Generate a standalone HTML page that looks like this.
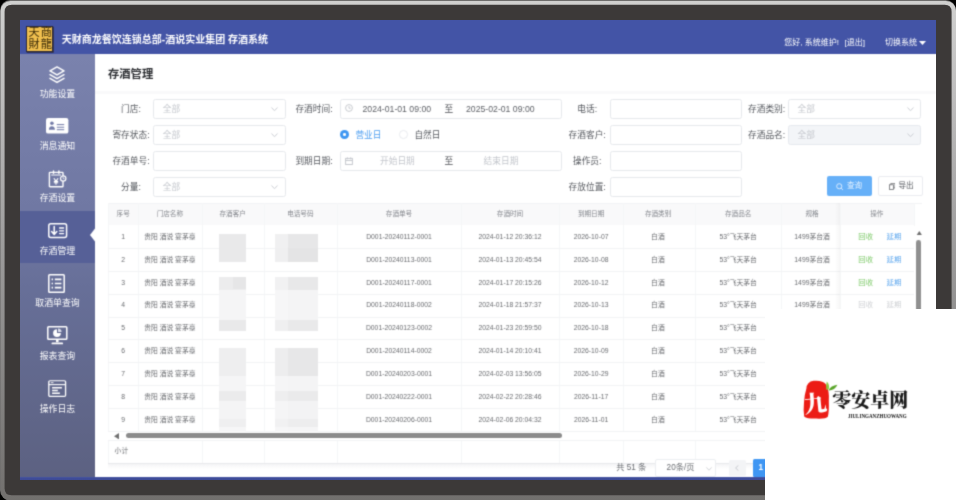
<!DOCTYPE html>
<html lang="zh-CN">
<head>
<meta charset="utf-8">
<title>存酒管理</title>
<style>
*{box-sizing:border-box;margin:0;padding:0}
html,body{width:956px;height:500px;overflow:hidden;background:#fff}
body{font-family:"Liberation Sans","Noto Sans CJK SC",sans-serif;position:relative;color:#606266}
.abs{position:absolute}
#frame{position:absolute;left:0;top:0;width:956px;height:500px}
#screen{position:absolute;left:20px;top:20px;width:916px;height:459.6px;background:#fff;overflow:hidden;filter:url(#soft)}
#hdr{position:absolute;left:0;top:0;width:916px;height:34.4px;background:#4354a6}
#side{position:absolute;left:0;top:34.4px;width:75.4px;height:425.2px;background:linear-gradient(180deg,#7a82ad 0,#6f77a2 40%,#676f98 55%,#5c6181 100%)}
#side .act{position:absolute;left:0;top:157px;width:75.4px;height:52px;background:#566097}
#side .lbl{position:absolute;left:0;width:75px;text-align:center;color:#fff;font-size:8.9px;line-height:12px;white-space:nowrap}
#side svg{position:absolute;overflow:visible}
.t{position:absolute;white-space:nowrap;line-height:12px}
.lab{position:absolute;white-space:nowrap;font-size:8.7px;line-height:12px;color:#55585e;text-align:center;width:60px}
.inp{position:absolute;height:20.8px;border:1px solid #e6e8ec;border-radius:2.5px;background:#fff}
.ph{position:absolute;font-size:8.7px;line-height:12px;color:#c3c6cc;white-space:nowrap}
.c{position:absolute;text-align:center;white-space:nowrap;font-size:6.8px;line-height:10px;color:#6a6c70}
.h{position:absolute;text-align:center;white-space:nowrap;font-size:6.6px;line-height:10px;color:#85888e}
.vl{position:absolute;width:1px;background:#f5f6f7}
.hl{position:absolute;height:1px;background:#f2f3f5}
.mz{position:absolute;background:#e9e9ea}
</style>
</head>
<body>
<svg id="frame" viewBox="0 0 956 500">
<defs>
<linearGradient id="eg" x1="0" y1="0" x2="0" y2="1">
<stop offset="0" stop-color="#d0d0cf"/><stop offset="0.2" stop-color="#bdbcbc"/><stop offset="0.5" stop-color="#9c9b9b"/><stop offset="1" stop-color="#72706e"/>
</linearGradient>
<filter id="soft" x="0" y="0" width="100%" height="100%" color-interpolation-filters="sRGB"><feConvolveMatrix order="3" kernelMatrix="1 4 1 4 16 4 1 4 1" divisor="36" edgeMode="duplicate" preserveAlpha="true"/></filter>
</defs>
<rect x="0" y="0" width="956" height="500" fill="#000"/>
<rect x="0" y="0" width="956" height="500.6" rx="10.5" ry="10.5" fill="#6e6d6c"/>
<rect x="0.6" y="0.9" width="955.4" height="499.4" rx="10" ry="10" fill="url(#eg)"/>
<path d="M12 4.7 H944.6 Q951.6 4.7 951.6 11.7 V488.2 Q951.6 495.2 944.6 495.2 H11.6 Q4.6 495.2 4.6 488.2 V11.7 Q4.6 4.7 12 4.7 Z" fill="#3c3938"/>
</svg>
<div id="screen">
<div id="hdr">
<div class="abs" style="left:6.3px;top:6px;width:26.8px;height:25.6px;background:#f0bf4e;border:0.9px solid #2b2838;box-shadow:0.7px 0.7px 0 #2b2838"></div>
<div class="t" style="left:8.4px;top:7.4px;font-size:11.2px;line-height:11.4px;color:#3a2b08;letter-spacing:1.2px">天商</div>
<div class="t" style="left:8.4px;top:19px;font-size:11.2px;line-height:11.4px;color:#3a2b08;letter-spacing:1.2px">財龍</div>
<div class="t" style="left:41.8px;top:13.6px;font-size:10px;font-weight:700;color:#fff">天财商龙餐饮连锁总部-酒说实业集团 存酒系统</div>
<div class="t" style="left:764.2px;top:16.8px;font-size:8px;color:#fff">您好, 系统维护!</div>
<div class="t" style="left:824.6px;top:16.8px;font-size:8px;color:#fff">[退出]</div>
<div class="t" style="left:865px;top:16.8px;font-size:8px;color:#fff">切换系统</div>
<svg class="abs" style="left:899px;top:21px" width="7" height="4" viewBox="0 0 7 4"><path d="M0 0H7L3.5 4Z" fill="#fff"/></svg>
</div>
<div id="side"><div class="act"></div>
<div class="lbl" style="top:34.0px">功能设置</div>
<div class="lbl" style="top:86.0px">消息通知</div>
<div class="lbl" style="top:138.0px">存酒设置</div>
<div class="lbl" style="top:190.2px">存酒管理</div>
<div class="lbl" style="top:242.4px">取酒单查询</div>
<div class="lbl" style="top:295.6px">报表查询</div>
<div class="lbl" style="top:348.2px">操作日志</div>
<svg style="left:29px;top:11.8px" width="16" height="17.4" viewBox="0 0 16 17.4" fill="none" stroke="#fff" stroke-width="1.5" stroke-linejoin="round" stroke-linecap="round">
<path d="M8 0.9 L15 4.9 L8 8.9 L1 4.9 Z"/><path d="M1 8.7 L8 12.7 L15 8.7"/><path d="M1 12.4 L8 16.4 L15 12.4"/></svg>
<svg style="left:26px;top:63.6px" width="22.4" height="15.6" viewBox="0 0 22.4 15.6">
<rect x="0" y="0" width="22.4" height="15.6" rx="2.2" fill="#fff"/>
<circle cx="5.9" cy="5.3" r="1.8" fill="#737ba7"/><path d="M2.9 11.8 Q2.9 8.2 5.9 8.2 Q8.9 8.2 8.9 11.8 Z" fill="#737ba7"/>
<rect x="10.8" y="6.1" width="7.4" height="1" fill="#737ba7"/><rect x="10.8" y="8.7" width="7.4" height="1.1" fill="#8088b0"/><rect x="10.8" y="11.2" width="7.4" height="1" fill="#737ba7"/></svg>
<svg style="left:28.0px;top:115.6px" width="19" height="18" viewBox="0 0 19 18" fill="none" stroke="#fff" stroke-width="1.4" stroke-linecap="round" stroke-linejoin="round">
<rect x="1.4" y="2.4" width="13.6" height="14.4" rx="0.6"/><path d="M3.6 5 H12.6" stroke-width="1"/><path d="M5.5 0.9 V3.2 M10.9 0.9 V3.2" stroke-width="1.5"/>
<circle cx="15.2" cy="8.5" r="2.7" stroke-width="1.2" fill="#727aa5"/><path d="M15.1 7.4 V8.7 H16.1" stroke-width="0.8"/>
<path d="M6.1 8.6 L8 11 L9.9 8.6 M8 11 V14.2 M6.3 11.4 H9.7 M6.3 12.8 H9.7" stroke-width="1.1"/></svg>
<svg style="left:27.6px;top:168.4px" width="19.4" height="15.4" viewBox="0 0 19.4 15.4" fill="none" stroke="#fff" stroke-width="1.5" stroke-linecap="round" stroke-linejoin="round">
<rect x="0.8" y="0.8" width="17.8" height="13.8" rx="2"/>
<path d="M6.2 3.6 V11.2 M3.6 8.6 L6.2 11.4 L8.8 8.6"/><path d="M11.6 5 H15.6 M11.6 7.8 H15.6 M11.6 10.6 H15.6" stroke-width="1.3"/></svg>
<svg style="left:70.2px;top:174.0px" width="5.4" height="14" viewBox="0 0 6.2 14" preserveAspectRatio="none"><path d="M6.2 0 L0 7 L6.2 14 Z" fill="#fff"/></svg>
<svg style="left:28px;top:219.6px" width="17" height="19" viewBox="0 0 17 19" fill="none" stroke="#fff" stroke-width="1.5" stroke-linejoin="round">
<rect x="0.8" y="0.8" width="15.4" height="17.4" rx="0.8"/>
<path d="M3.6 5.4 H5 M6.8 5.4 H13.4 M3.6 9.5 H5 M6.8 9.5 H13.4 M3.6 13.6 H5 M6.8 13.6 H13.4" stroke-width="1.7"/></svg>
<svg style="left:27px;top:271.6px" width="20.6" height="18.6" viewBox="0 0 20.6 18.6" fill="none" stroke="#fff" stroke-width="1.5" stroke-linejoin="round">
<rect x="0.8" y="0.8" width="19" height="12.4" rx="0.8"/>
<path d="M10.3 13.2 V16.2" stroke-width="2.6"/><path d="M5.4 17.4 H15.2" stroke-width="1.8" stroke-linecap="round"/>
<path d="M10 3.2 A3.9 3.9 0 1 0 13.9 7.1 H10 Z" fill="#fff" stroke="none"/><path d="M11 2.4 A3.6 3.6 0 0 1 14.6 6 H11 Z" fill="#d9dcea" stroke="none"/></svg>
<svg style="left:28.200000000000003px;top:325.2px" width="18.4" height="17.2" viewBox="0 0 18 18.6" preserveAspectRatio="none" fill="none" stroke="#fff" stroke-width="1.3" stroke-linejoin="round">
<rect x="0.8" y="0.8" width="16.4" height="17" rx="1.2"/><path d="M0.8 5 H17.2" stroke-width="1.2"/>
<path d="M2.8 2.9 H5.4" stroke-width="0.9"/>
<path d="M4 8.4 H13.6 M4 11.4 H9.6 M4 14.4 H11.6" stroke-width="1.5"/></svg>
</div>
<div id="main">
<div class="t" style="left:88px;top:47.400000000000006px;font-size:11.3px;line-height:14px;font-weight:700;color:#2b2d31">存酒管理</div>
<div class="abs" style="left:75.4px;top:71.4px;width:841px;height:3px;background:#f9f9fa"></div>
<div class="lab" style="left:81.0px;top:82.7px">门店:</div>
<div class="inp" style="left:133.0px;top:78.5px;width:132.8px;"></div>
<div class="ph" style="left:142.8px;top:82.7px;">全部</div>
<svg class="abs" style="left:251.1px;top:86.9px" width="7" height="4.5" viewBox="0 0 7 4.5" fill="none" stroke="#c6c9cf" stroke-width="0.9"><path d="M0.5 0.5 L3.5 3.7 L6.5 0.5"/></svg>
<div class="lab" style="left:81.0px;top:108.7px">寄存状态:</div>
<div class="inp" style="left:133.0px;top:104.5px;width:132.8px;"></div>
<div class="ph" style="left:142.8px;top:108.7px;">全部</div>
<svg class="abs" style="left:251.1px;top:112.9px" width="7" height="4.5" viewBox="0 0 7 4.5" fill="none" stroke="#c6c9cf" stroke-width="0.9"><path d="M0.5 0.5 L3.5 3.7 L6.5 0.5"/></svg>
<div class="lab" style="left:81.0px;top:134.9px">存酒单号:</div>
<div class="inp" style="left:133.0px;top:130.7px;width:132.8px;"></div>
<div class="lab" style="left:81.0px;top:160.9px">分量:</div>
<div class="inp" style="left:133.0px;top:156.7px;width:132.8px;"></div>
<div class="ph" style="left:142.8px;top:160.9px;">全部</div>
<svg class="abs" style="left:251.1px;top:165.1px" width="7" height="4.5" viewBox="0 0 7 4.5" fill="none" stroke="#c6c9cf" stroke-width="0.9"><path d="M0.5 0.5 L3.5 3.7 L6.5 0.5"/></svg>
<div class="lab" style="left:264.0px;top:82.7px">存酒时间:</div>
<div class="lab" style="left:264.0px;top:134.9px">到期日期:</div>
<div class="inp" style="left:319.6px;top:78.5px;width:222.2px;"></div>
<div class="inp" style="left:319.6px;top:130.7px;width:222.2px;"></div>
<div class="ph" style="left:342.5px;top:82.7px;color:#5c5f65;">2024-01-01 09:00</div>
<div class="ph" style="left:424.4px;top:82.7px;color:#4a4d52;">至</div>
<div class="ph" style="left:446.0px;top:82.7px;color:#5c5f65;">2025-02-01 09:00</div>
<div class="ph" style="left:360.0px;top:134.9px;">开始日期</div>
<div class="ph" style="left:424.4px;top:134.9px;color:#4a4d52;">至</div>
<div class="ph" style="left:463.6px;top:134.9px;">结束日期</div>
<svg class="abs" style="left:324.6px;top:84.4px" width="8" height="8" viewBox="0 0 6.8 6.8" fill="none" stroke="#c3c6cc" stroke-width="0.8"><circle cx="3.4" cy="3.4" r="2.9"/><path d="M3.4 1.8 V3.6 H4.8"/></svg>
<svg class="abs" style="left:324.6px;top:136.9px" width="8" height="8.2" viewBox="0 0 6.8 7" fill="none" stroke="#c3c6cc" stroke-width="0.8"><rect x="0.5" y="1.2" width="5.8" height="5.2"/><path d="M0.5 3 H6.3 M2 0.3 V2 M4.8 0.3 V2"/></svg>
<div class="abs" style="left:320.1px;top:110.2px;width:8.8px;height:8.8px;border-radius:50%;background:#3f97f2"></div><div class="abs" style="left:323.1px;top:113.1px;width:2.6px;height:2.6px;border-radius:50%;background:#fff"></div>
<div class="ph" style="left:335.4px;top:108.7px;color:#4a9df0;">营业日</div>
<div class="abs" style="left:379.2px;top:110.2px;width:8.8px;height:8.8px;border-radius:50%;border:0.8px solid #e9ebef;background:#fff"></div>
<div class="ph" style="left:394.4px;top:108.7px;color:#55585e;">自然日</div>
<div class="lab" style="left:537.2px;top:82.7px">电话:</div>
<div class="inp" style="left:590.0px;top:78.5px;width:131.8px;"></div>
<div class="lab" style="left:537.2px;top:108.7px">存酒客户:</div>
<div class="inp" style="left:590.0px;top:104.5px;width:131.8px;"></div>
<div class="lab" style="left:537.2px;top:134.9px">操作员:</div>
<div class="inp" style="left:590.0px;top:130.7px;width:131.8px;"></div>
<div class="lab" style="left:537.2px;top:160.9px">存放位置:</div>
<div class="inp" style="left:590.0px;top:156.7px;width:131.8px;"></div>
<div class="lab" style="left:716.6px;top:82.7px">存酒类别:</div>
<div class="lab" style="left:716.6px;top:108.7px">存酒品名:</div>
<div class="inp" style="left:768.4px;top:78.5px;width:132.8px;"></div>
<div class="inp" style="left:768.4px;top:104.5px;width:132.8px;background:#f3f5f8;border-color:#e6e9ee"></div>
<div class="ph" style="left:777.6px;top:82.7px;">全部</div>
<div class="ph" style="left:777.6px;top:108.7px;">全部</div>
<svg class="abs" style="left:886.9px;top:86.9px" width="7" height="4.5" viewBox="0 0 7 4.5" fill="none" stroke="#c6c9cf" stroke-width="0.9"><path d="M0.5 0.5 L3.5 3.7 L6.5 0.5"/></svg>
<svg class="abs" style="left:886.9px;top:112.9px" width="7" height="4.5" viewBox="0 0 7 4.5" fill="none" stroke="#c6c9cf" stroke-width="0.9"><path d="M0.5 0.5 L3.5 3.7 L6.5 0.5"/></svg>
<div class="abs" style="left:807.4px;top:156.2px;width:44.4px;height:20px;border-radius:2px;background:#66b0f8"></div>
<svg class="abs" style="left:816.4px;top:162.6px" width="7.4" height="7.4" viewBox="0 0 6.6 6.6" fill="none" stroke="#e4f1ff" stroke-width="0.8"><circle cx="2.9" cy="2.9" r="2.3"/><path d="M4.6 4.6 L6.2 6.2"/></svg>
<div class="t" style="left:827.0px;top:160.4px;font-size:7.6px;color:#e1f0ff">查询</div>
<div class="abs" style="left:857.8px;top:156.2px;width:44.8px;height:20px;border-radius:2px;background:#fff;border:1px solid #eaecf0"></div>
<svg class="abs" style="left:868.6px;top:163.0px" width="6.4" height="6.8" viewBox="0 0 6.4 6.8" fill="none" stroke="#6a6c70" stroke-width="0.8"><rect x="0.4" y="1.8" width="4.2" height="4.6"/><path d="M1.8 1.8 V0.4 H6 V5 H4.6"/></svg>
<div class="t" style="left:878.4px;top:160.4px;font-size:7.6px;color:#55585e">导出</div>
<div class="abs" style="left:88.3px;top:182.6px;width:805.7px;height:22.9px;background:#f9f9fa"></div>
<div class="hl" style="left:88.3px;top:182.6px;width:814.1px"></div>
<div class="vl" style="left:88.3px;top:182.6px;height:229.0px"></div>
<div class="vl" style="left:88.3px;top:420.6px;height:22.2px"></div>
<div class="vl" style="left:118.0px;top:182.6px;height:229.0px"></div>
<div class="vl" style="left:181.7px;top:182.6px;height:229.0px"></div>
<div class="vl" style="left:181.7px;top:420.6px;height:22.2px"></div>
<div class="vl" style="left:243.7px;top:182.6px;height:229.0px"></div>
<div class="vl" style="left:243.7px;top:420.6px;height:22.2px"></div>
<div class="vl" style="left:317.0px;top:182.6px;height:229.0px"></div>
<div class="vl" style="left:317.0px;top:420.6px;height:22.2px"></div>
<div class="vl" style="left:441.0px;top:182.6px;height:229.0px"></div>
<div class="vl" style="left:441.0px;top:420.6px;height:22.2px"></div>
<div class="vl" style="left:539.0px;top:182.6px;height:229.0px"></div>
<div class="vl" style="left:539.0px;top:420.6px;height:22.2px"></div>
<div class="vl" style="left:603.2px;top:182.6px;height:229.0px"></div>
<div class="vl" style="left:603.2px;top:420.6px;height:22.2px"></div>
<div class="vl" style="left:675.0px;top:182.6px;height:229.0px"></div>
<div class="vl" style="left:675.0px;top:420.6px;height:22.2px"></div>
<div class="vl" style="left:761.4px;top:182.6px;height:229.0px"></div>
<div class="vl" style="left:761.4px;top:420.6px;height:22.2px"></div>
<div class="vl" style="left:819.6px;top:182.6px;height:229.0px"></div>
<div class="vl" style="left:819.6px;top:420.6px;height:22.2px"></div>
<div class="vl" style="left:894.0px;top:182.6px;height:229.0px"></div>
<div class="vl" style="left:894.0px;top:420.6px;height:22.2px"></div>
<div class="h" style="left:88.3px;width:29.7px;top:188.9px">序号</div>
<div class="h" style="left:118.0px;width:63.7px;top:188.9px">门店名称</div>
<div class="h" style="left:181.7px;width:62.0px;top:188.9px">存酒客户</div>
<div class="h" style="left:243.7px;width:73.3px;top:188.9px">电话号码</div>
<div class="h" style="left:317.0px;width:124.0px;top:188.9px">存酒单号</div>
<div class="h" style="left:441.0px;width:98.0px;top:188.9px">存酒时间</div>
<div class="h" style="left:539.0px;width:64.2px;top:188.9px">到期日期</div>
<div class="h" style="left:601.2px;width:73.8px;top:188.9px">存酒类别</div>
<div class="h" style="left:675.0px;width:86.4px;top:188.9px">存酒品名</div>
<div class="h" style="left:764.6px;width:55.0px;top:188.9px">规格</div>
<div class="h" style="left:819.6px;width:74.4px;top:188.9px">操作</div>
<div class="hl" style="left:88.3px;top:227.9px;width:814.1px"></div>
<div class="c" style="left:88.3px;width:29.7px;top:211.8px">1</div>
<div class="c" style="left:118.0px;width:63.7px;top:211.8px">贵阳 酒说 宴茅臺</div>
<div class="c" style="left:317.0px;width:124.0px;top:211.8px">D001-20240112-0001</div>
<div class="c" style="left:441.0px;width:98.0px;top:211.8px">2024-01-12 20:36:12</div>
<div class="c" style="left:539.0px;width:64.2px;top:211.8px">2026-10-07</div>
<div class="c" style="left:600.8px;width:74.2px;top:211.8px">白酒</div>
<div class="c" style="left:675.0px;width:86.4px;top:211.8px">53°飞天茅台</div>
<div class="c" style="left:764.6px;width:55.0px;top:211.8px">1499茅台酒</div>
<div class="c" style="left:838.2px;width:15px;top:211.8px;color:#7fca6a;font-size:7.4px">回收</div>
<div class="c" style="left:866.4px;width:15px;top:211.8px;color:#5fa8ee;font-size:7.4px">延期</div>
<div class="hl" style="left:88.3px;top:250.7px;width:814.1px"></div>
<div class="c" style="left:88.3px;width:29.7px;top:234.7px">2</div>
<div class="c" style="left:118.0px;width:63.7px;top:234.7px">贵阳 酒说 宴茅臺</div>
<div class="c" style="left:317.0px;width:124.0px;top:234.7px">D001-20240113-0001</div>
<div class="c" style="left:441.0px;width:98.0px;top:234.7px">2024-01-13 20:45:54</div>
<div class="c" style="left:539.0px;width:64.2px;top:234.7px">2026-10-08</div>
<div class="c" style="left:600.8px;width:74.2px;top:234.7px">白酒</div>
<div class="c" style="left:675.0px;width:86.4px;top:234.7px">53°飞天茅台</div>
<div class="c" style="left:764.6px;width:55.0px;top:234.7px">1499茅台酒</div>
<div class="c" style="left:838.2px;width:15px;top:234.7px;color:#7fca6a;font-size:7.4px">回收</div>
<div class="c" style="left:866.4px;width:15px;top:234.7px;color:#5fa8ee;font-size:7.4px">延期</div>
<div class="hl" style="left:88.3px;top:273.6px;width:814.1px"></div>
<div class="c" style="left:88.3px;width:29.7px;top:257.6px">3</div>
<div class="c" style="left:118.0px;width:63.7px;top:257.6px">贵阳 酒说 宴茅臺</div>
<div class="c" style="left:317.0px;width:124.0px;top:257.6px">D001-20240117-0001</div>
<div class="c" style="left:441.0px;width:98.0px;top:257.6px">2024-01-17 20:15:26</div>
<div class="c" style="left:539.0px;width:64.2px;top:257.6px">2026-10-12</div>
<div class="c" style="left:600.8px;width:74.2px;top:257.6px">白酒</div>
<div class="c" style="left:675.0px;width:86.4px;top:257.6px">53°飞天茅台</div>
<div class="c" style="left:764.6px;width:55.0px;top:257.6px">1499茅台酒</div>
<div class="c" style="left:838.2px;width:15px;top:257.6px;color:#7fca6a;font-size:7.4px">回收</div>
<div class="c" style="left:866.4px;width:15px;top:257.6px;color:#5fa8ee;font-size:7.4px">延期</div>
<div class="hl" style="left:88.3px;top:296.5px;width:814.1px"></div>
<div class="c" style="left:88.3px;width:29.7px;top:280.4px">4</div>
<div class="c" style="left:118.0px;width:63.7px;top:280.4px">贵阳 酒说 宴茅臺</div>
<div class="c" style="left:317.0px;width:124.0px;top:280.4px">D001-20240118-0002</div>
<div class="c" style="left:441.0px;width:98.0px;top:280.4px">2024-01-18 21:57:37</div>
<div class="c" style="left:539.0px;width:64.2px;top:280.4px">2026-10-13</div>
<div class="c" style="left:600.8px;width:74.2px;top:280.4px">白酒</div>
<div class="c" style="left:675.0px;width:86.4px;top:280.4px">53°飞天茅台</div>
<div class="c" style="left:764.6px;width:55.0px;top:280.4px">1499茅台酒</div>
<div class="c" style="left:838.2px;width:15px;top:280.4px;color:#cfd1d4;font-size:7.4px">回收</div>
<div class="c" style="left:866.4px;width:15px;top:280.4px;color:#cfd1d4;font-size:7.4px">延期</div>
<div class="hl" style="left:88.3px;top:319.4px;width:814.1px"></div>
<div class="c" style="left:88.3px;width:29.7px;top:303.3px">5</div>
<div class="c" style="left:118.0px;width:63.7px;top:303.3px">贵阳 酒说 宴茅臺</div>
<div class="c" style="left:317.0px;width:124.0px;top:303.3px">D001-20240123-0002</div>
<div class="c" style="left:441.0px;width:98.0px;top:303.3px">2024-01-23 20:59:50</div>
<div class="c" style="left:539.0px;width:64.2px;top:303.3px">2026-10-18</div>
<div class="c" style="left:600.8px;width:74.2px;top:303.3px">白酒</div>
<div class="c" style="left:675.0px;width:86.4px;top:303.3px">53°飞天茅台</div>
<div class="c" style="left:764.6px;width:55.0px;top:303.3px">1499茅台酒</div>
<div class="hl" style="left:88.3px;top:342.2px;width:814.1px"></div>
<div class="c" style="left:88.3px;width:29.7px;top:326.2px">6</div>
<div class="c" style="left:118.0px;width:63.7px;top:326.2px">贵阳 酒说 宴茅臺</div>
<div class="c" style="left:317.0px;width:124.0px;top:326.2px">D001-20240114-0002</div>
<div class="c" style="left:441.0px;width:98.0px;top:326.2px">2024-01-14 20:10:41</div>
<div class="c" style="left:539.0px;width:64.2px;top:326.2px">2026-10-09</div>
<div class="c" style="left:600.8px;width:74.2px;top:326.2px">白酒</div>
<div class="c" style="left:675.0px;width:86.4px;top:326.2px">53°飞天茅台</div>
<div class="c" style="left:764.6px;width:55.0px;top:326.2px">1499茅台酒</div>
<div class="hl" style="left:88.3px;top:365.1px;width:814.1px"></div>
<div class="c" style="left:88.3px;width:29.7px;top:349.1px">7</div>
<div class="c" style="left:118.0px;width:63.7px;top:349.1px">贵阳 酒说 宴茅臺</div>
<div class="c" style="left:317.0px;width:124.0px;top:349.1px">D001-20240203-0001</div>
<div class="c" style="left:441.0px;width:98.0px;top:349.1px">2024-02-03 13:56:05</div>
<div class="c" style="left:539.0px;width:64.2px;top:349.1px">2026-10-29</div>
<div class="c" style="left:600.8px;width:74.2px;top:349.1px">白酒</div>
<div class="c" style="left:675.0px;width:86.4px;top:349.1px">53°飞天茅台</div>
<div class="c" style="left:764.6px;width:55.0px;top:349.1px">1499茅台酒</div>
<div class="hl" style="left:88.3px;top:388.0px;width:814.1px"></div>
<div class="c" style="left:88.3px;width:29.7px;top:371.9px">8</div>
<div class="c" style="left:118.0px;width:63.7px;top:371.9px">贵阳 酒说 宴茅臺</div>
<div class="c" style="left:317.0px;width:124.0px;top:371.9px">D001-20240222-0001</div>
<div class="c" style="left:441.0px;width:98.0px;top:371.9px">2024-02-22 20:28:46</div>
<div class="c" style="left:539.0px;width:64.2px;top:371.9px">2026-11-17</div>
<div class="c" style="left:600.8px;width:74.2px;top:371.9px">白酒</div>
<div class="c" style="left:675.0px;width:86.4px;top:371.9px">53°飞天茅台</div>
<div class="c" style="left:764.6px;width:55.0px;top:371.9px">1499茅台酒</div>
<div class="hl" style="left:88.3px;top:410.8px;width:814.1px"></div>
<div class="c" style="left:88.3px;width:29.7px;top:394.8px">9</div>
<div class="c" style="left:118.0px;width:63.7px;top:394.8px">贵阳 酒说 宴茅臺</div>
<div class="c" style="left:317.0px;width:124.0px;top:394.8px">D001-20240206-0001</div>
<div class="c" style="left:441.0px;width:98.0px;top:394.8px">2024-02-06 20:04:32</div>
<div class="c" style="left:539.0px;width:64.2px;top:394.8px">2026-11-01</div>
<div class="c" style="left:600.8px;width:74.2px;top:394.8px">白酒</div>
<div class="c" style="left:675.0px;width:86.4px;top:394.8px">53°飞天茅台</div>
<div class="c" style="left:764.6px;width:55.0px;top:394.8px">1499茅台酒</div>
<div class="mz" style="left:199.3px;top:213.6px;width:26.7px;height:14.6px;background:#e9e9ea"></div>
<div class="mz" style="left:255.2px;top:213.6px;width:13.5px;height:14.6px;background:#f0f0f1"></div>
<div class="mz" style="left:268.0px;top:213.6px;width:30.2px;height:14.6px;background:#e7e7e8"></div>
<div class="mz" style="left:199.3px;top:227.5px;width:26.7px;height:14.7px;background:#e9e9ea"></div>
<div class="mz" style="left:255.2px;top:227.5px;width:13.5px;height:14.7px;background:#efeff0"></div>
<div class="mz" style="left:268.0px;top:227.5px;width:30.2px;height:14.7px;background:#e4e4e5"></div>
<div class="mz" style="left:199.3px;top:256.6px;width:26.7px;height:13.6px;background:#ececed"></div>
<div class="mz" style="left:255.2px;top:256.6px;width:13.5px;height:13.6px;background:#f1f1f2"></div>
<div class="mz" style="left:268.0px;top:256.6px;width:30.2px;height:13.6px;background:#e8e8e9"></div>
<div class="mz" style="left:199.3px;top:269.5px;width:26.7px;height:30.8px;background:#f5f5f6"></div>
<div class="mz" style="left:255.2px;top:269.5px;width:13.5px;height:30.8px;background:#f6f6f7"></div>
<div class="mz" style="left:268.0px;top:269.5px;width:30.2px;height:30.8px;background:#f4f4f5"></div>
<div class="mz" style="left:199.3px;top:299.6px;width:26.7px;height:11.4px;background:#e9e9ea"></div>
<div class="mz" style="left:255.2px;top:299.6px;width:13.5px;height:11.4px;background:#efeff0"></div>
<div class="mz" style="left:268.0px;top:299.6px;width:30.2px;height:11.4px;background:#e9e9ea"></div>
<div class="mz" style="left:199.3px;top:327.5px;width:26.7px;height:28.7px;background:#eeeeef"></div>
<div class="mz" style="left:255.2px;top:327.5px;width:13.5px;height:28.7px;background:#ededee"></div>
<div class="mz" style="left:268.0px;top:327.5px;width:30.2px;height:28.7px;background:#e7e7e8"></div>
<div class="mz" style="left:199.3px;top:355.5px;width:26.7px;height:15.7px;background:#f5f5f6"></div>
<div class="mz" style="left:255.2px;top:355.5px;width:13.5px;height:15.7px;background:#f5f5f6"></div>
<div class="mz" style="left:268.0px;top:355.5px;width:30.2px;height:15.7px;background:#f4f4f5"></div>
<div class="mz" style="left:199.3px;top:370.5px;width:26.7px;height:11.5px;background:#ebebec"></div>
<div class="mz" style="left:255.2px;top:370.5px;width:13.5px;height:11.5px;background:#eeeeef"></div>
<div class="mz" style="left:268.0px;top:370.5px;width:30.2px;height:11.5px;background:#eaeaeb"></div>
<div class="mz" style="left:199.3px;top:381.3px;width:26.7px;height:17.9px;background:#f4f4f5"></div>
<div class="mz" style="left:255.2px;top:381.3px;width:13.5px;height:17.9px;background:#f5f5f6"></div>
<div class="mz" style="left:268.0px;top:381.3px;width:30.2px;height:17.9px;background:#f3f3f4"></div>
<div class="mz" style="left:199.3px;top:398.5px;width:26.7px;height:9.2px;background:#efeff0"></div>
<div class="mz" style="left:255.2px;top:398.5px;width:13.5px;height:9.2px;background:#f1f1f2"></div>
<div class="mz" style="left:268.0px;top:398.5px;width:30.2px;height:9.2px;background:#ededee"></div>
<div class="mz" style="left:199.3px;top:407.0px;width:26.7px;height:5.3px;background:#f6f6f7"></div>
<div class="mz" style="left:255.2px;top:407.0px;width:13.5px;height:5.3px;background:#f6f6f7"></div>
<div class="mz" style="left:268.0px;top:407.0px;width:30.2px;height:5.3px;background:#f5f5f6"></div>
<div class="mz" style="left:212.6px;top:256.6px;width:13.4px;height:12.9px;background:#e6e6e7"></div>
<div class="abs" style="left:814.6px;top:182.6px;width:5px;height:229.0px;background:linear-gradient(90deg,rgba(0,0,0,0),rgba(0,0,0,0.035))"></div>
<svg class="abs" style="left:93.6px;top:412.6px" width="5" height="6.4" viewBox="0 0 5 6.4"><path d="M5 0 L0 3.2 L5 6.4 Z" fill="#6f6f6f"/></svg>
<div class="abs" style="left:105.6px;top:413.1px;width:436.6px;height:5.4px;border-radius:2.6px;background:#8b8b8b"></div>
<div class="hl" style="left:88.3px;top:420.4px;width:814.1px"></div>
<div class="c" style="left:94.6px;top:426.4px;text-align:left">小计</div>
<div class="hl" style="left:88.3px;top:442.8px;width:814.1px;background:#e8e9ec"></div>
<div class="abs" style="left:88.3px;top:443.8px;width:814.1px;height:5px;background:linear-gradient(180deg,#f4f4f6,#fff)"></div>
<div class="abs" style="left:894.4px;top:205.5px;width:8px;height:237.3px;background:#fff"></div>
<svg class="abs" style="left:895.8px;top:210.6px" width="6.6" height="4.8" viewBox="0 0 6 4.6"><path d="M0 4.6 L3 0 L6 4.6 Z" fill="#6f6f6f"/></svg>
<div class="abs" style="left:896.2px;top:220.4px;width:4.8px;height:80px;border-radius:2.4px;background:#8f8f8f"></div>
<div class="t" style="left:596.2px;top:442.4px;font-size:8.2px;color:#686b70">共 51 条</div>
<div class="abs" style="left:635.0px;top:439.4px;width:61px;height:17.2px;border:1px solid #eceef1;border-radius:2px;background:#fff"></div>
<div class="t" style="left:646.6px;top:442.4px;font-size:8.2px;color:#686b70">20条/页</div>
<svg class="abs" style="left:685.6px;top:446.6px" width="6" height="4" viewBox="0 0 6 4" fill="none" stroke="#c6c9cf" stroke-width="0.8"><path d="M0.4 0.4 L3 3.2 L5.6 0.4"/></svg>
<div class="abs" style="left:709.0px;top:440.4px;width:17px;height:16px;border-radius:1.5px;background:#f3f4f6"></div>
<svg class="abs" style="left:715.4px;top:445.4px" width="4" height="6" viewBox="0 0 4 6" fill="none" stroke="#c3c6cc" stroke-width="0.9"><path d="M3.4 0.4 L0.6 3 L3.4 5.6"/></svg>
<div class="abs" style="left:733.0px;top:439.4px;width:17px;height:17.2px;border-radius:1.5px;background:#3f96f3"></div>
<div class="t" style="left:738.6px;top:442.4px;font-size:8.2px;color:#fff;font-weight:700">1</div>
<div class="abs" style="left:0;top:457.2px;width:916px;height:2.6px;background:linear-gradient(180deg,#4554a4,#36418a)"></div>
</div>
</div>
<div id="wm" class="abs" style="left:764.8px;top:308.8px;width:192px;height:192px;background:#fff;filter:url(#soft)">
<svg class="abs" style="left:0;top:0" width="192" height="192" viewBox="764.8 308.8 192 192">
<path d="M806.2 388.4 Q806.6 381.6 813.4 380.6 Q822.4 379.8 825.8 384.2 Q829.4 390.6 828.6 401 Q829 411.6 827.6 416.6 Q826 418.8 816 418.4 Q806.6 418.6 804 416.2 Q803 410 803.8 402 Q804.4 394 806.2 388.4 Z" fill="#ec1c15"/>
<path d="M826 389.6 Q825.6 384.6 826.6 381.2 Q829.8 384.6 828.6 389 Z" fill="#8cc63f"/>
<path d="M828.2 390.2 Q830.6 385.4 837.2 384.6 Q834.6 390.4 828.2 390.2 Z" fill="#5aa52a"/>
<text x="803.2" y="411.6" font-family="'Liberation Serif','Noto Serif CJK SC',serif" font-weight="900" font-size="23" fill="#fff" transform="rotate(-6 815 400)">九</text>
<text x="832" y="406.4" font-family="'Liberation Serif','Noto Serif CJK SC',serif" font-weight="900" font-size="19" fill="#1a1a1a" textLength="76" lengthAdjust="spacingAndGlyphs">零安卓网</text>
<text x="847.8" y="417.8" font-family="'Liberation Serif',serif" font-weight="700" font-size="5.2" fill="#111" textLength="58.6" lengthAdjust="spacingAndGlyphs">JIULINGANZHUOWANG</text>
</svg>
</div>
</body>
</html>
